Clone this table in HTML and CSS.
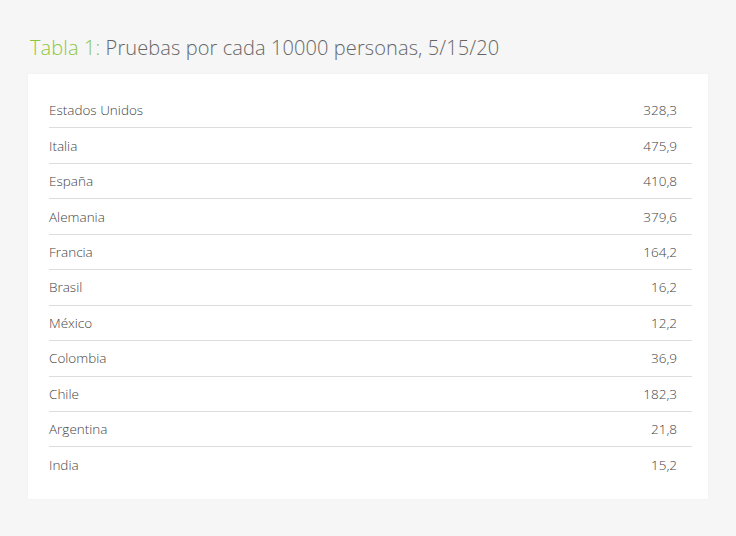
FILE: index.html
```html
<!DOCTYPE html>
<html lang="es">
<head>
<meta charset="utf-8">
<link rel="stylesheet" href="styles.css">
</head>
<body>
<main class="page">
  <h1 class="title"><span class="label">Tabla 1:</span> Pruebas por cada 10000 personas, 5/15/20</h1>
  <section class="card">
    <table class="data">
      <tbody>
        <tr><td>Estados Unidos</td><td class="num">328,3</td></tr>
        <tr><td>Italia</td><td class="num">475,9</td></tr>
        <tr><td>España</td><td class="num">410,8</td></tr>
        <tr><td>Alemania</td><td class="num">379,6</td></tr>
        <tr><td>Francia</td><td class="num">164,2</td></tr>
        <tr><td>Brasil</td><td class="num">16,2</td></tr>
        <tr><td>México</td><td class="num">12,2</td></tr>
        <tr><td>Colombia</td><td class="num">36,9</td></tr>
        <tr><td>Chile</td><td class="num">182,3</td></tr>
        <tr><td>Argentina</td><td class="num">21,8</td></tr>
        <tr><td>India</td><td class="num">15,2</td></tr>
      </tbody>
    </table>
  </section>
</main>
</body>
</html>
```

FILE: styles.css
```css
html, body {
  margin: 0;
  padding: 0;
  background: #f6f6f6;
}
body {
  font-family: "Open Sans", "Lato", sans-serif;
  color: #555;
}
.page {
  padding: 34px 28px 38px 28px;
  width: 680px;
}
.title {
  margin: 0 0 0 2px;
  font-size: 20px;
  font-weight: 300;
  line-height: 28px;
  letter-spacing: 0.1px;
  color: #666;
}
.label {
  color: #8cc63f;
}
.card {
  margin-top: 12px;
  background: #fff;
  padding: 19px 16px 17px 21px;
  box-shadow: 0 0 2px rgba(0,0,0,0.04);
}
.data {
  width: 100%;
  border-collapse: collapse;
  font-size: 13.5px;
  font-weight: 300;
  color: #444;
}
.data td {
  height: 34.45px;
  padding: 0;
  border-bottom: 1px solid #ddd;
  vertical-align: middle;
}
.data tr:last-child td {
  border-bottom: none;
}
.data .num {
  text-align: right;
  padding-right: 15px;
}
```
